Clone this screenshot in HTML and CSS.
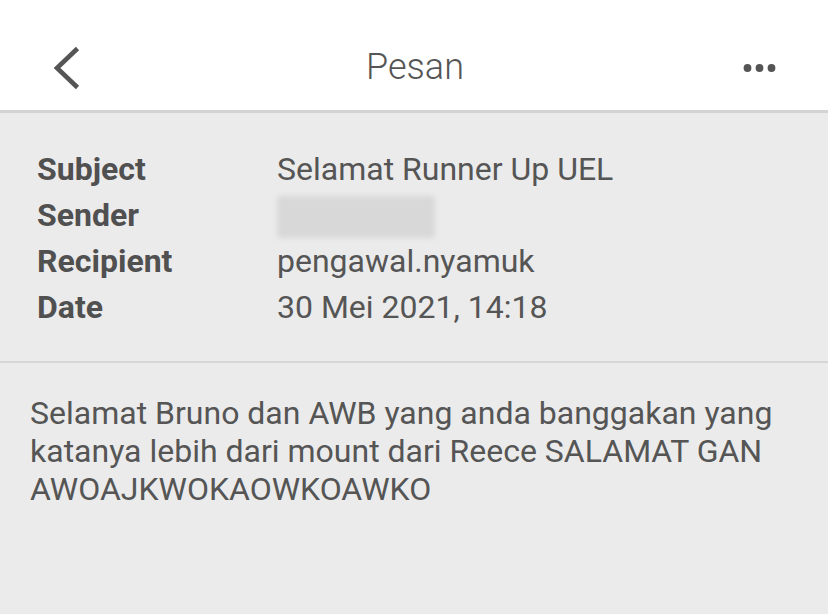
FILE: index.html
```html
<!DOCTYPE html>
<html>
<head>
<meta charset="utf-8">
<link rel="stylesheet" href="styles.css">
</head>
<body>
<div class="app">
  <header class="topbar">
    <div class="back">
      <svg width="30" height="44" viewBox="0 0 30 44"><path d="M24.5 2.5 L4 22 L24.5 41.5" fill="none" stroke="#555" stroke-width="4.6" stroke-linejoin="miter"/></svg>
    </div>
    <div class="title">Pesan</div>
    <div class="more">
      <svg width="34" height="44" viewBox="0 0 34 44"><circle cx="4.5" cy="22" r="3.9" fill="#555"/><circle cx="16.5" cy="22" r="3.9" fill="#555"/><circle cx="28.5" cy="22" r="3.9" fill="#555"/></svg>
    </div>
  </header>
  <section class="meta">
    <div class="row"><span class="label">Subject</span><span class="value">Selamat Runner Up UEL</span></div>
    <div class="row"><span class="label">Sender</span><span class="value"><span class="blur"></span></span></div>
    <div class="row"><span class="label">Recipient</span><span class="value">pengawal.nyamuk</span></div>
    <div class="row"><span class="label">Date</span><span class="value">30 Mei 2021, 14:18</span></div>
  </section>
  <section class="body">Selamat Bruno dan AWB yang anda banggakan yang katanya lebih dari mount dari Reece SALAMAT GAN AWOAJKWOKAOWKOAWKO</section>
</div>
</body>
</html>
```
FILE: styles.css
```css
html, body { margin: 0; padding: 0; }
body {
  width: 828px; height: 614px; overflow: hidden;
  background: #ebebeb;
  font-family: Roboto, "Liberation Sans", sans-serif;
  color: #555;
}
.app { display: flex; flex-direction: column; height: 614px; }
.topbar {
  flex: none;
  background: #fff;
  border-bottom: 3px solid #d3d3d3;
  display: grid;
  grid-template-columns: 1fr auto 1fr;
  align-items: start;
  padding: 46px 51px 0 53px;
  box-sizing: border-box;
  height: 113px;
}
.back { display: flex; justify-self: start; }
.title {
  font-weight: 300; font-size: 36px; line-height: 42px; color: #555;
}
.more { display: flex; justify-self: end; }
.meta {
  flex: none;
  padding: 33px 0 31px 37px;
  border-bottom: 2px solid #d6d6d6;
}
.row { display: flex; height: 46px; line-height: 46px; font-size: 32px; }
.label { width: 240px; font-weight: 700; color: #505050; }
.value { font-weight: 400; display: flex; align-items: center; }
.blur {
  display: block; width: 158px; height: 42px; margin-top: 4px;
  background: #d8d8d8; filter: blur(2.5px); border-radius: 4px;
}
.body {
  flex: none;
  padding: 31px 40px 0 30px;
  font-size: 32px; line-height: normal;
}
```
